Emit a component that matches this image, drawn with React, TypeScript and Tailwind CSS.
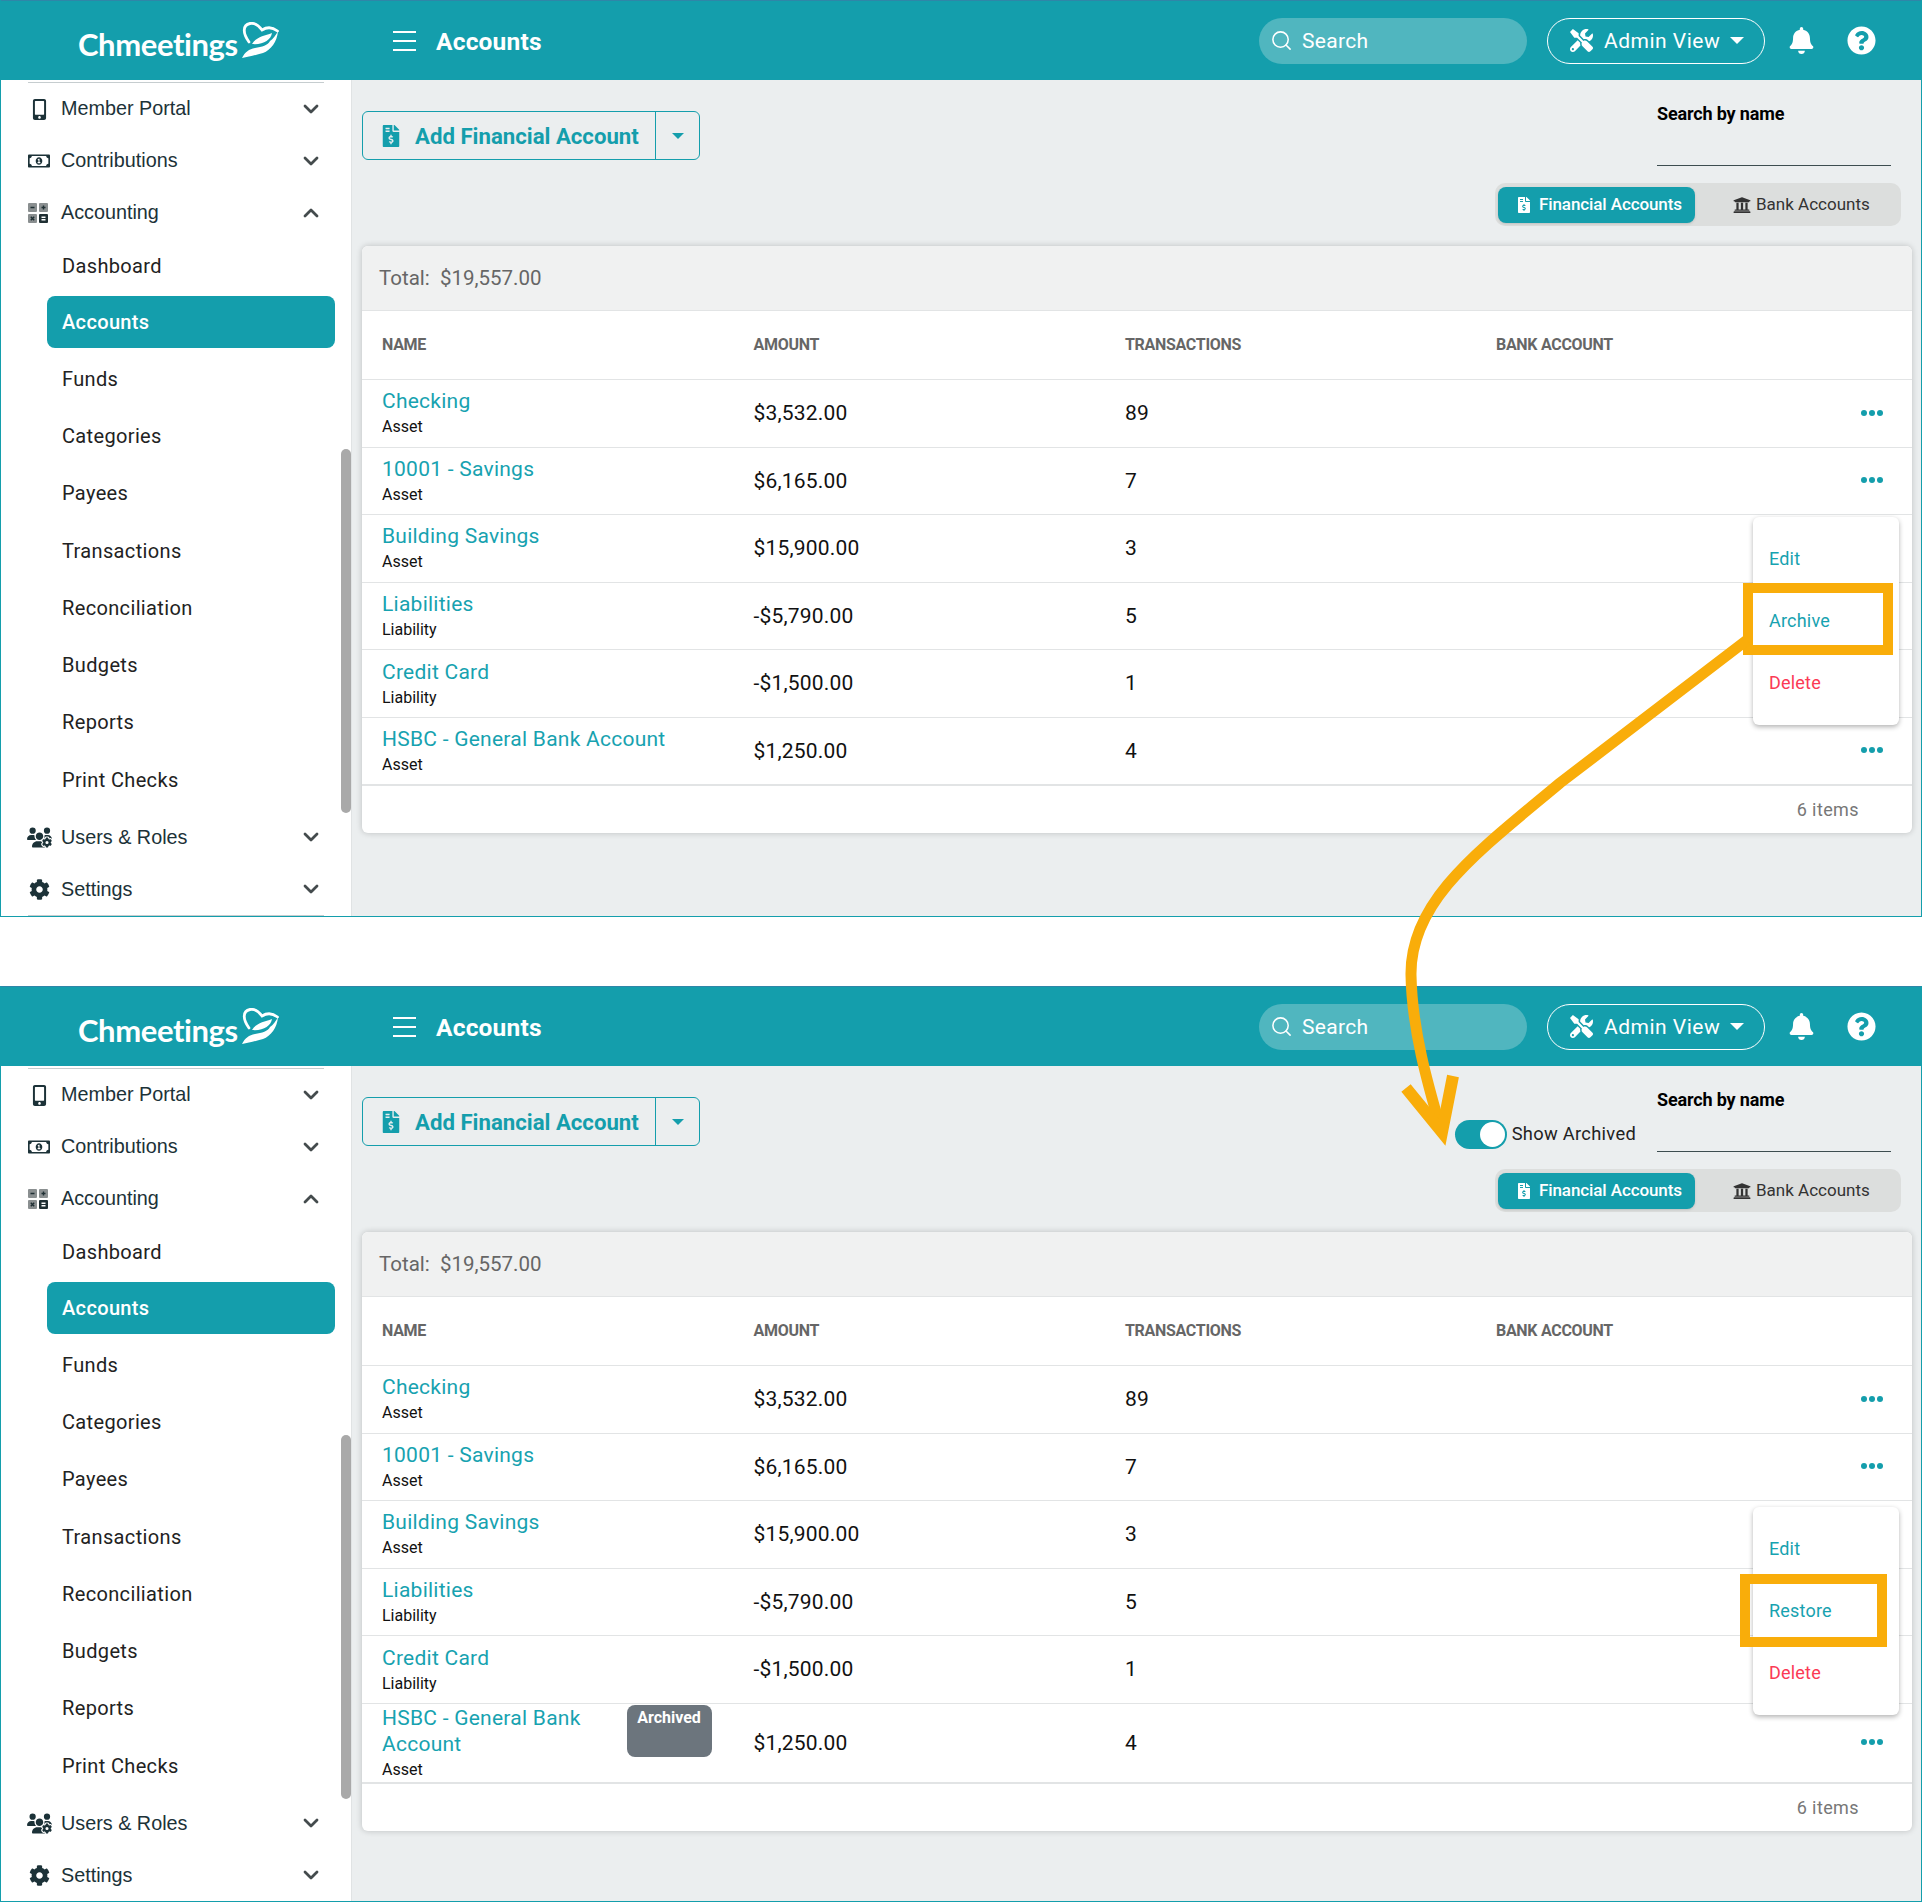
import React from 'react';
import {
  FaMobileAlt,
  FaRegMoneyBillAlt,
  FaCog,
  FaBell,
  FaQuestionCircle,
  FaTools,
  FaFileInvoiceDollar,
  FaUniversity,
} from 'react-icons/fa';
import { FaUsersGear } from 'react-icons/fa6';
import { ChevronDown, ChevronUp, Search } from 'lucide-react';

const subItems = ['Dashboard', 'Accounts', 'Funds', 'Categories', 'Payees', 'Transactions', 'Reconciliation', 'Budgets', 'Reports', 'Print Checks'];

const rows = [
  { name: 'Checking', type: 'Asset', amount: '$3,532.00', count: '89' },
  { name: '10001 - Savings', type: 'Asset', amount: '$6,165.00', count: '7' },
  { name: 'Building Savings', type: 'Asset', amount: '$15,900.00', count: '3' },
  { name: 'Liabilities', type: 'Liability', amount: '-$5,790.00', count: '5' },
  { name: 'Credit Card', type: 'Liability', amount: '-$1,500.00', count: '1' },
  { name: 'HSBC - General Bank Account', type: 'Asset', amount: '$1,250.00', count: '4' },
];

function Logo() {
  return (
    <div className="flex items-center w-[351px] pl-[77px] h-full">
      <span className="font-['Lato',sans-serif] text-[31px] font-bold text-white tracking-[-0.4px] mt-[8px]">Chmeetings</span>
      <svg viewBox="0 0 38 36" className="w-[38px] h-[36px] ml-[3px] mb-[2px]" fill="none">
        <path d="M8 20C2 12 1 3 9 1.500C14 .5 18 4 21 8C25 5.500 30 4 36.500 9" stroke="#fff" strokeWidth="2.800" strokeLinecap="round" />
        <path d="M37 9C36 20 30 28 22 31C14 33 8 35 1 36C4 30 8 27 14 26C21 25 27 23 29 19C32 17 35 13 37 9Z" fill="#fff" />
        <path d="M11 22C15 15 23 14 31 11C30 18 22 23 11 22Z" fill="#fff" />
      </svg>
    </div>
  );
}

function Header() {
  return (
    <header className="flex items-center h-[80px] bg-[#149eac] border-t border-[#2f86a8] shrink-0">
      <Logo />
      <div className="flex flex-col justify-between w-[23px] h-[20px] ml-[41px]">
        <span className="block h-[2px] bg-white" />
        <span className="block h-[2px] bg-white" />
        <span className="block h-[2px] bg-white" />
      </div>
      <span className="ml-[20px] mt-[3px] text-[24.500px] font-bold text-white tracking-[0.2px]">Accounts</span>
      <div className="flex items-center h-[46px] w-[268px] ml-auto rounded-full bg-[#50b6bf] pl-[11px] text-white">
        <Search size={23} strokeWidth={1.6} />
        <span className="ml-[9px] mt-[3px] text-[21px] tracking-[0.3px]">Search</span>
      </div>
      <div className="flex items-center h-[46px] w-[218px] ml-[20px] rounded-full border border-white pl-[22px] text-white">
        <FaTools size={23} />
        <span className="ml-[11px] mt-[3px] text-[21px] tracking-[0.5px]">Admin View</span>
        <span className="ml-[10px] border-x-[7px] border-t-[7px] border-x-transparent border-t-white" />
      </div>
      <FaBell size={27} className="ml-[23px] text-white" />
      <FaQuestionCircle size={29} className="ml-[32px] mr-[45px] text-white" />
    </header>
  );
}

function CalcIcon() {
  return (
    <svg viewBox="0 0 20 20" className="w-[20px] h-[20px] -ml-[2px]">
      <rect x="0" y="0" width="9" height="9" rx="1" fill="#8a8f90" />
      <rect x="11" y="0" width="9" height="9" rx="1" fill="#8a8f90" />
      <rect x="0" y="11" width="9" height="9" rx="1" fill="#8a8f90" />
      <rect x="11" y="11" width="9" height="9" rx="1" fill="#1f2f33" />
      <path d="M2.500 4.500h4M15.500 2.500v4M13.500 4.500h4M2.800 13.800l3.400 3.400M6.200 13.800l-3.400 3.400" stroke="#1f2f33" strokeWidth="1.400" />
      <path d="M13.500 14.300h4M13.500 16.700h4" stroke="#fff" strokeWidth="1.400" />
    </svg>
  );
}

function TopItem({ icon, label, open }: { icon: React.ReactNode; label: string; open?: boolean }) {
  return (
    <div className="flex items-center h-[52px] pl-[25px] pr-[28px] font-['Liberation_Sans',sans-serif] text-[19.800px] text-[#1c3238]">
      <span className="flex items-center justify-center w-[26px]">{icon}</span>
      <span className="ml-[9px]">{label}</span>
      <span className="ml-auto text-[#444b4d]">
        {open ? <ChevronUp size={24} strokeWidth={2.800} /> : <ChevronDown size={24} strokeWidth={2.800} />}
      </span>
    </div>
  );
}

function Sidebar() {
  return (
    <aside className="relative w-[351px] shrink-0 bg-white border-r border-[#e0e3e4] overflow-hidden">
      <div className="h-[1px] mx-[27px] mt-[2px] bg-[#c6cdcf]" />
      <TopItem icon={<FaMobileAlt size={21} />} label="Member Portal" />
      <TopItem icon={<FaRegMoneyBillAlt size={22} />} label="Contributions" />
      <TopItem icon={<CalcIcon />} label="Accounting" open />
      <div className="pl-[46px] pr-[16px] mb-[3px]">
        {subItems.map((item) => (
          <div
            key={item}
            className={
              item === 'Dashboard'
                ? 'flex items-center h-[54px] text-[20px] tracking-[0.35px] text-[#222]'
                : item === 'Accounts'
                  ? 'flex items-center h-[57px] text-[20px] tracking-[0.35px] text-[#222]'
                  : 'flex items-center h-[57.300px] text-[20px] tracking-[0.35px] text-[#222]'
            }
          >
            {item === 'Accounts' ? (
              <span className="flex items-center w-full h-[52px] pl-[15px] rounded-[8px] bg-[#149eac] text-white font-medium">{item}</span>
            ) : (
              <span className="pl-[15px]">{item}</span>
            )}
          </div>
        ))}
      </div>
      <TopItem icon={<FaUsersGear size={25} />} label="Users & Roles" />
      <TopItem icon={<FaCog size={21} />} label="Settings" />
      <div className="h-[2px] mx-[27px] bg-[#c6cdcf]" />
      <div className="absolute right-0 top-[369px] w-[10px] h-[364px] rounded-[5px] bg-[#a9a9a9]" />
    </aside>
  );
}

function Toolbar({ archived }: { archived?: boolean }) {
  return (
    <div className="flex items-start justify-between h-[166px] pr-[20px]">
      <div className="flex items-stretch h-[49px] mt-[31px] rounded-[6px] border-[1.500px] border-[#149eac] text-[#149eac]">
        <div className="flex items-center w-[293px] pl-[17px] border-r-[1.500px] border-[#149eac]">
          <FaFileInvoiceDollar size={22} />
          <span className="ml-[13px] mt-[3px] text-[22.200px] font-bold">Add Financial Account</span>
        </div>
        <div className="flex items-center justify-center w-[43px]">
          <span className="border-x-[6px] border-t-[6px] border-x-transparent border-t-[#149eac]" />
        </div>
      </div>
      <div className="flex flex-col items-end">
        <div className="flex items-end mt-[23px]">
          {archived && (
            <div className="flex items-center mr-[21px] mb-[3px]">
              <span className="flex items-center justify-end w-[52px] h-[29px] pr-[2px] rounded-full bg-[#149eac]">
                <span className="w-[25px] h-[25px] rounded-full bg-white" />
              </span>
              <span className="ml-[5px] -mt-[2px] text-[18.300px] tracking-[0.3px] text-[#222]">Show Archived</span>
            </div>
          )}
          <div className="w-[234px] h-[63px] mr-[10px] border-b border-[#3d4d50]">
            <span className="block text-[18px] font-bold text-black tracking-[-0.15px] leading-[22px]">Search by name</span>
          </div>
        </div>
        <div className="flex items-center h-[43px] w-[406px] mt-[17px] px-[3px] rounded-[10px] bg-[#dcdedd]">
          <div className="flex items-center h-[36px] w-[197px] pl-[18px] rounded-[8px] bg-[#149eac] text-white shadow">
            <FaFileInvoiceDollar size={16} />
            <span className="ml-[7px] text-[17px] font-medium tracking-[-0.1px]">Financial Accounts</span>
          </div>
          <div className="flex items-center pl-[38px] text-[#333]">
            <FaUniversity size={18} />
            <span className="ml-[5px] text-[17px]">Bank Accounts</span>
          </div>
        </div>
      </div>
    </div>
  );
}

function Dots() {
  return (
    <svg viewBox="0 0 22 6" className="w-[22px] h-[6px] mb-[1px] fill-[#149eac]">
      <circle cx="3" cy="3" r="3" />
      <circle cx="11" cy="3" r="3" />
      <circle cx="19" cy="3" r="3" />
    </svg>
  );
}

function AccountRow({ row, index, archived }: { row: (typeof rows)[number]; index: number; archived?: boolean }) {
  const isLast = index === rows.length - 1;
  const tall = isLast && archived;
  const showDots = index < 2 || isLast;
  return (
    <div className={`grid grid-cols-[371.500px_371.500px_371px_1fr] items-center pl-[20px] border-[#e2e4e5] ${tall ? 'h-[80px]' : isLast ? 'h-[68px]' : 'h-[67.600px]'} ${isLast ? 'border-b-2' : 'border-b'}`}>
      <div className="flex items-start justify-between">
        <div className={tall ? 'w-[230px]' : ''}>
          <div className="mb-[2px] text-[21px] leading-[26px] tracking-[0.25px] text-[#17a2b0]">{row.name}</div>
          <div className="text-[16px] leading-[22px] text-[#111]">{row.type}</div>
        </div>
        {tall && (
          <div className="w-[85px] h-[52px] mr-[42px] rounded-[8px] bg-[#6c757d] pt-[1px] text-center text-[16px] font-bold text-white">Archived</div>
        )}
      </div>
      <div className="mt-[1px] text-[21px] tracking-[0.2px] text-[#111]">{row.amount}</div>
      <div className="mt-[1px] text-[21px] tracking-[0.2px] text-[#111]">{row.count}</div>
      <div className="flex justify-end pr-[29px]">{showDots && <Dots />}</div>
    </div>
  );
}

function Menu({ middle, archived }: { middle: string; archived?: boolean }) {
  return (
    <>
      <div className={`absolute right-[13px] w-[146px] h-[208px] rounded-[6px] bg-white shadow-[0_2px_5px_rgba(0,0,0,0.3)] pl-[16px] text-[18px] tracking-[0.2px] ${archived ? 'top-[275px]' : 'top-[271px]'}`}>
        <div className="flex items-center h-[62px] mt-[10px] text-[#17a2b0]">Edit</div>
        <div className="flex items-center h-[62px] text-[#17a2b0]">{middle}</div>
        <div className="flex items-center h-[62px] text-[#fb3a55]">Delete</div>
      </div>
      <div className={`absolute border-[10px] border-[#f9ad0a] ${archived ? 'left-[1378px] top-[342px] w-[147px] h-[73px]' : 'left-[1381px] top-[337px] w-[150px] h-[72px]'}`} />
    </>
  );
}

function AccountsCard({ archived }: { archived?: boolean }) {
  return (
    <div className="relative mr-[9px] rounded-[6px] bg-white shadow-[0_0_6px_rgba(0,0,0,0.2)]">
      <div className="flex items-center h-[65px] pl-[17px] rounded-t-[6px] bg-[#f0f1f1] border-b border-[#e2e4e5] text-[20.500px] text-[#666]">
        Total:&nbsp;&nbsp;$19,557.00
      </div>
      <div className="grid grid-cols-[371.500px_371.500px_371px_1fr] items-center h-[69px] pl-[20px] border-b border-[#e2e4e5] text-[16px] font-bold tracking-[-0.3px] text-[#666]">
        <span>NAME</span>
        <span>AMOUNT</span>
        <span>TRANSACTIONS</span>
        <span>BANK ACCOUNT</span>
      </div>
      {rows.map((row, i) => (
        <AccountRow key={row.name} row={row} index={i} archived={archived} />
      ))}
      <div className="flex items-center justify-end h-[47px] pr-[53px] text-[18px] tracking-[0.4px] text-[#777]">6 items</div>
      <Menu middle={archived ? 'Restore' : 'Archive'} archived={archived} />
    </div>
  );
}

function Panel({ archived }: { archived?: boolean }) {
  return (
    <section className={`flex flex-col border-x border-b border-[#149eac] ${archived ? 'h-[916px]' : 'h-[917px]'}`}>
      <Header />
      <div className="flex flex-1 min-h-0">
        <Sidebar />
        <main className="flex-1 min-w-0 bg-[#ebeeef] pl-[10px]">
          <Toolbar archived={archived} />
          <AccountsCard archived={archived} />
        </main>
      </div>
    </section>
  );
}

function Arrow() {
  return (
    <svg className="absolute left-0 top-0 w-[1922px] h-[1902px] pointer-events-none" viewBox="0 0 1922 1902" fill="none" stroke="#f9ad0a" strokeWidth="11">
      <path d="M1747 640L1560 783C1480 850 1410 900 1411 975C1412 1030 1428 1085 1441 1130" />
      <path d="M1406 1088L1442 1132L1453 1076" strokeWidth="12" />
    </svg>
  );
}

export default function App() {
  return (
    <div className="relative w-[1922px] h-[1902px] bg-white font-['Roboto',sans-serif]">
      <Panel />
      <div className="h-[69px]" />
      <Panel archived />
      <Arrow />
    </div>
  );
}
